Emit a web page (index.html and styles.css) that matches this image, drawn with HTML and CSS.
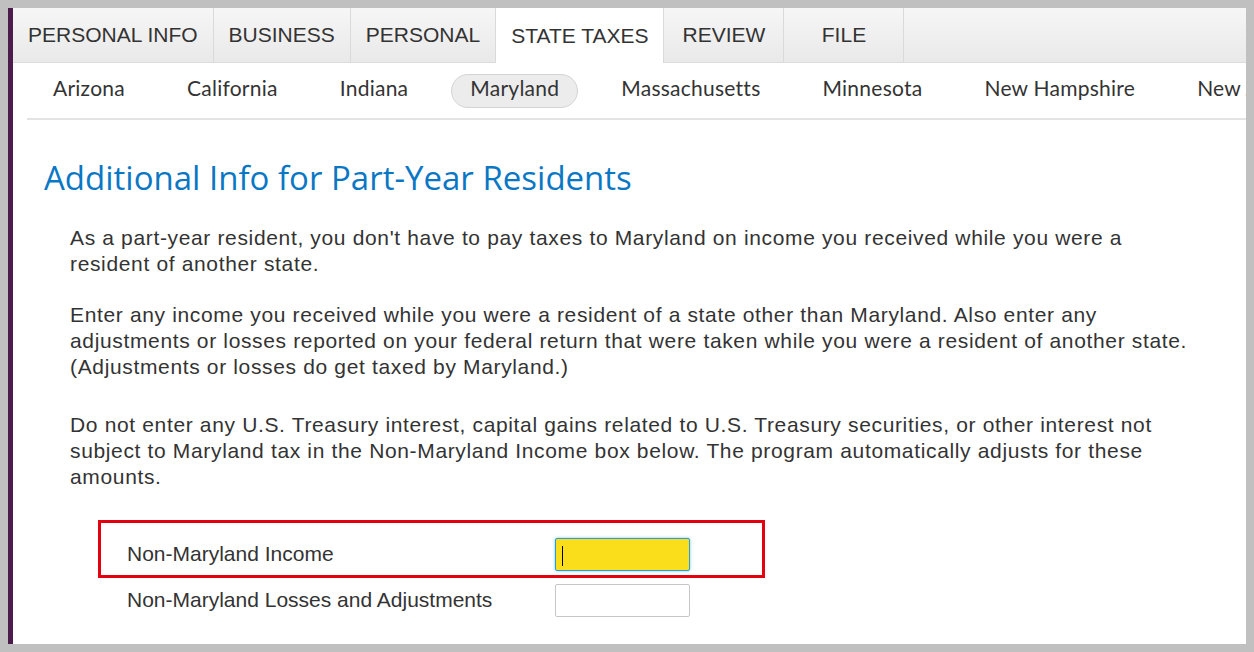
FILE: index.html
```html
<!doctype html>
<html lang="en">
<head>
  <meta charset="UTF-8">
  <title>State Taxes - Maryland</title>
  <link rel="stylesheet" href="styles.css">
</head>
<body>
  <div class="frame">
    <div class="tabs">
      <a class="tab">PERSONAL INFO</a>
      <a class="tab">BUSINESS</a>
      <a class="tab">PERSONAL</a>
      <a class="tab active">STATE TAXES</a>
      <a class="tab">REVIEW</a>
      <a class="tab">FILE</a>
    </div>
    <div class="states">
      <a class="state">Arizona</a>
      <a class="state">California</a>
      <a class="state">Indiana</a>
      <a class="state current">Maryland</a>
      <a class="state">Massachusetts</a>
      <a class="state">Minnesota</a>
      <a class="state">New Hampshire</a>
      <a class="state">New Jersey</a>
    </div>
    <div class="content">
      <h1>Additional Info for Part-Year Residents</h1>
      <div class="text">
        <p>As a part-year resident, you don't have to pay taxes to Maryland on income you received while you were a resident of another state.</p>
        <p>Enter any income you received while you were a resident of a state other than Maryland. Also enter any adjustments or losses reported on your federal return that were taken while you were a resident of another state. (Adjustments or losses do get taxed by Maryland.)</p>
        <p class="last">Do not enter any U.S. Treasury interest, capital gains related to U.S. Treasury securities, or other interest not subject to Maryland tax in the Non-Maryland Income box below. The program automatically adjusts for these amounts.</p>
      </div>
      <div class="form">
        <div class="row marked">
          <label for="income">Non-Maryland Income</label>
          <div class="field focused" id="income"><span class="caret"></span></div>
        </div>
        <div class="row">
          <label for="losses">Non-Maryland Losses and Adjustments</label>
          <div class="field" id="losses"></div>
        </div>
      </div>
    </div>
  </div>
</body>
</html>
```

FILE: styles.css
```css
body {
  margin: 0;
  padding: 8px 8px 8px 8px;
  background-color: #c0c0c0;
  overflow: hidden;
}

.frame {
  width: 1233px;
  height: 636px;
  background-color: #ffffff;
  border-left: 5px solid #4b1d4d;
  overflow: hidden;
}

/* top tab bar */
.tabs {
  display: flex;
  height: 54px;
  background: linear-gradient(#f6f6f6, #e9e9e9);
  border-bottom: 1px solid #dcdcdc;
}

.tab {
  display: flex;
  align-items: center;
  justify-content: center;
  min-width: 120px;
  padding: 0 15px;
  box-sizing: border-box;
  border-right: 1px solid #dadada;
  font: 21px "Liberation Sans", Arial, sans-serif;
  color: #333333;
}

.tab.active {
  background: #ffffff;
  margin-bottom: -1px;
}

/* state sub nav */
.states {
  display: flex;
  align-items: center;
  gap: 24px;
  height: 55px;
  margin-left: 14px;
  padding-left: 7px;
  border-bottom: 2px solid #e3e3e3;
  white-space: nowrap;
  overflow: hidden;
}

.state {
  flex: none;
  padding: 0 18px;
  height: 34px;
  line-height: 38px;
  box-sizing: border-box;
  border-radius: 17px;
  border: 1px solid transparent;
  font: 21px Lato, "Open Sans", sans-serif;
  letter-spacing: 0.25px;
  color: #333333;
}

.state.current {
  background: #ececec;
  border-color: #d4d4d4;
}

/* main content */
.content {
  padding: 36px 0 0 31px;
}

h1 {
  margin: 0 0 25px;
  font: 33px/44px "Open Sans", Lato, sans-serif;
  color: #0a77c5;
}

.text {
  width: 1125px;
  padding-left: 26px;
  font: 21px/26px "Liberation Sans", Arial, sans-serif;
  letter-spacing: 0.65px;
  color: #333333;
}

.text p {
  margin: 0 0 25px;
}

.text p.last {
  margin-top: 32px;
}

.form {
  padding-top: 5px;
  margin-left: 54px;
}

.row {
  display: flex;
  align-items: center;
  width: 667px;
  height: 44px;
  box-sizing: border-box;
  padding-left: 26px;
  border: 3px solid transparent;
  font: 21px "Liberation Sans", Arial, sans-serif;
  color: #333333;
}

.row.marked {
  height: 58px;
  padding-top: 10px;
  border-color: #e3000f;
}

.row label {
  width: 428px;
}

.field {
  width: 135px;
  height: 33px;
  box-sizing: border-box;
  border: 1px solid #c6c6c6;
  border-radius: 2px;
  background: #ffffff;
}

.field.focused {
  background: #fade1b;
  border-color: #2b9be0;
  box-shadow: 0 0 3px #6cc3f5;
  padding: 7px 0 0 6px;
}

.caret {
  display: block;
  width: 1px;
  height: 20px;
  background: #000000;
}
```
